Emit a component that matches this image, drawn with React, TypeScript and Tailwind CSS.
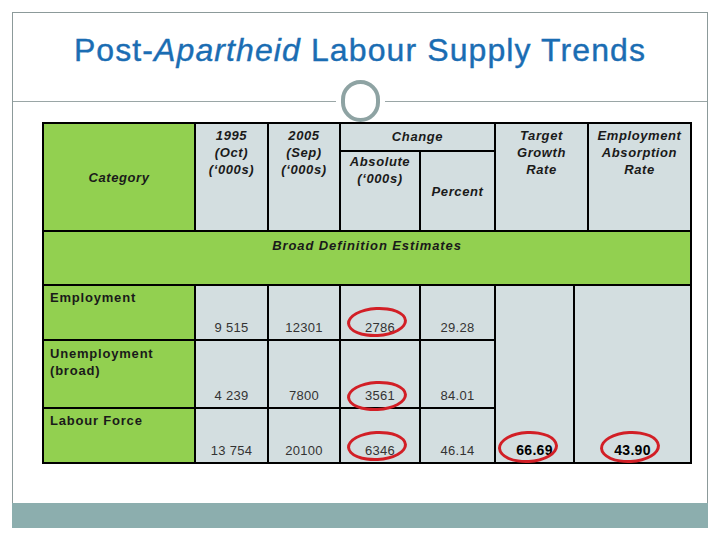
import type { ReactNode } from 'react';

// Slide: "Post-Apartheid Labour Supply Trends"
const GREEN = 'bg-[#92d050]';
const GREY = 'bg-[#d3dee0]';

const head = 'text-[13px] leading-[17px] font-bold italic tracking-[0.6px] text-[#1a1a1a] text-center';
const label = 'text-[13px] leading-[17px] font-bold tracking-[0.8px] text-[#1a1a1a] pl-[6px]';
const num = 'text-[13px] leading-[17px] text-[#333] tracking-[0.3px] text-center flex items-end justify-center pb-[3px]';

function Cell({ className, children }: { className: string; children?: ReactNode }) {
  return <div className={className}>{children}</div>;
}

function Ring({ className }: { className: string }) {
  return (
    <div
      className={`absolute w-[60px] h-[30px] rounded-[50%] border-[3px] border-[#d21f26] -rotate-3 pointer-events-none ${className}`}
    />
  );
}

function DataTable() {
  return (
    <div className="relative ml-[29px] w-[650px]">
      <div className="grid grid-cols-[150px_71px_70px_78px_73px_77px_12px_101px] grid-rows-[26px_78px_52px_53px_66px_53px] gap-[2px] p-[2px] bg-black">
        {/* header */}
        <Cell className={`${GREEN} row-span-2 flex items-center justify-center ${head}`}>Category</Cell>
        <Cell className={`${GREY} row-span-2 pt-[3px] ${head}`}>
          1995
          <br />
          (Oct)
          <br />
          (‘000s)
        </Cell>
        <Cell className={`${GREY} row-span-2 pt-[3px] ${head}`}>
          2005
          <br />
          (Sep)
          <br />
          (‘000s)
        </Cell>
        <Cell className={`${GREY} col-span-2 pt-[4px] ${head}`}>Change</Cell>
        <Cell className={`${GREY} col-span-2 row-span-2 pt-[3px] ${head}`}>
          Target
          <br />
          Growth
          <br />
          Rate
        </Cell>
        <Cell className={`${GREY} row-span-2 pt-[3px] ${head}`}>
          Employment
          <br />
          Absorption
          <br />
          Rate
        </Cell>
        <Cell className={`${GREY} pt-[1px] ${head}`}>
          Absolute
          <br />
          (‘000s)
        </Cell>
        <Cell className={`${GREY} flex items-center justify-center ${head}`}>Percent</Cell>

        {/* section row */}
        <Cell className={`${GREEN} col-span-8 pt-[5px] ${head} tracking-[0.9px]`}>Broad Definition Estimates</Cell>

        {/* Employment */}
        <Cell className={`${GREEN} pt-[3px] ${label}`}>Employment</Cell>
        <Cell className={`${GREY} ${num}`}>9 515</Cell>
        <Cell className={`${GREY} ${num}`}>12301</Cell>
        <Cell className={`${GREY} ${num}`}>2786</Cell>
        <Cell className={`${GREY} ${num}`}>29.28</Cell>
        <Cell className={`${GREY} row-span-3 ${num} font-bold text-black text-[14px]`}>66.69</Cell>
        <Cell className={`${GREY} col-span-2 row-span-3 ${num} font-bold text-black text-[14px]`}>43.90</Cell>

        {/* Unemployment */}
        <Cell className={`${GREEN} pt-[4px] ${label}`}>
          Unemployment
          <br />
          (broad)
        </Cell>
        <Cell className={`${GREY} ${num}`}>4 239</Cell>
        <Cell className={`${GREY} ${num}`}>7800</Cell>
        <Cell className={`${GREY} ${num}`}>3561</Cell>
        <Cell className={`${GREY} ${num}`}>84.01</Cell>

        {/* Labour force */}
        <Cell className={`${GREEN} pt-[3px] ${label}`}>Labour Force</Cell>
        <Cell className={`${GREY} ${num}`}>13 754</Cell>
        <Cell className={`${GREY} ${num}`}>20100</Cell>
        <Cell className={`${GREY} ${num}`}>6346</Cell>
        <Cell className={`${GREY} ${num}`}>46.14</Cell>
      </div>

      {/* hand-drawn highlight rings */}
      <Ring className="left-[305px] top-[185px]" />
      <Ring className="left-[305px] top-[259px]" />
      <Ring className="left-[305px] top-[309px]" />
      <Ring className="left-[456px] top-[309px] h-[32px]" />
      <Ring className="left-[558px] top-[309px] h-[32px]" />
    </div>
  );
}

export default function App() {
  return (
    <div className="w-[720px] h-[540px] bg-white pt-[12px] pl-[12px] font-['Liberation_Sans',Arial,sans-serif]">
      <div className="w-[696px] h-[491px] border-t border-x border-[#8c9a9a] flex flex-col">
        <div className="h-[67px] pt-[22px] text-center text-[32px] leading-[30px] tracking-[1.1px] text-[#1a6db3] [-webkit-text-stroke:0.4px_#1a6db3]">
          Post-<span className="italic">Apartheid</span> Labour Supply Trends
        </div>
        <div className="h-[42px] flex items-center">
          <div className="flex-1 h-px bg-[#9aa6a6]" />
          <div className="w-[39px] h-[42px] mx-[5px] rounded-full border-[4px] border-[#8ea3a3]" />
          <div className="flex-1 h-px bg-[#9aa6a6]" />
        </div>
        <DataTable />
      </div>
      <div className="w-[696px] h-[25px] bg-[#8caeae]" />
    </div>
  );
}
